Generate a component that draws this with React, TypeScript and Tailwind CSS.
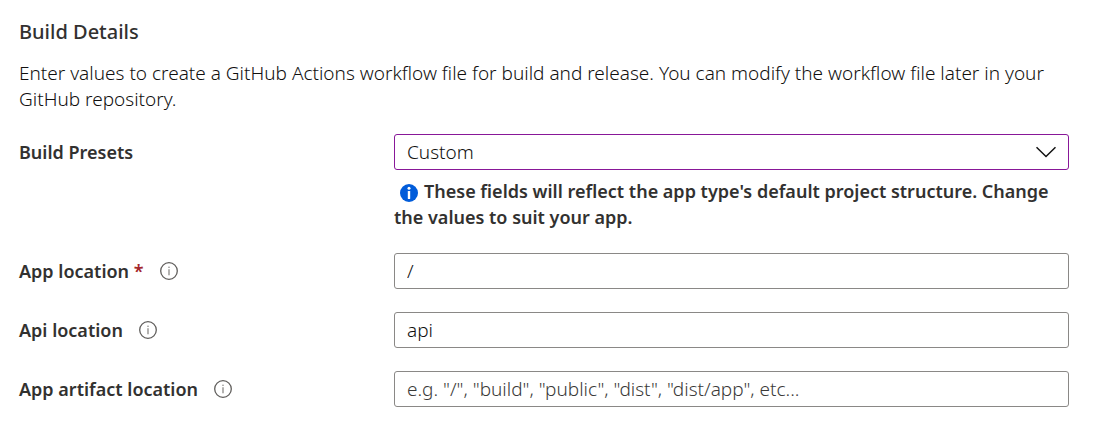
import { useState, type ReactNode } from "react";

function InfoOutline({ label }: { label: string }) {
  return (
    <button type="button" aria-label={`About ${label}`} className="ml-4 block shrink-0">
      <svg viewBox="0 0 18 18" className="block size-[18px]" fill="none" aria-hidden="true">
        <circle cx="9" cy="9" r="8.3" stroke="#605e5c" strokeWidth="1.3" />
        <path d="M9 7.2V13.2" stroke="#8a8886" strokeWidth="1.3" />
        <circle cx="9" cy="5.2" r="0.8" fill="#8a8886" />
      </svg>
    </button>
  );
}

function Row({
  id,
  label,
  required,
  info,
  children,
}: {
  id: string;
  label: string;
  required?: boolean;
  info?: boolean;
  children: ReactNode;
}) {
  return (
    <div className="grid grid-cols-[375px_minmax(0,1fr)] items-start">
      <div className="flex h-9 items-center">
        <label htmlFor={id} className="font-semibold">
          {label}
          {required && <span className="text-[#a4262c]"> *</span>}
        </label>
        {info && <InfoOutline label={label} />}
      </div>
      <div>{children}</div>
    </div>
  );
}

const fieldClass =
  "block h-9 w-full rounded-[3px] border border-[#8a8886] bg-white px-3 text-[19px] font-light text-[#11100f] outline-none placeholder:text-[#3b3a39] focus:border-[#0078d4]";

export default function App() {
  const [preset, setPreset] = useState("Custom");
  const [app, setApp] = useState("/");
  const [api, setApi] = useState("api");
  const [artifact, setArtifact] = useState("");

  return (
    <main className="min-h-screen bg-white pt-[19px] pr-[41px] pb-10 pl-[19px] font-['Noto_Sans','Open_Sans',sans-serif] text-[18px] leading-[26px] text-[#323130]">
      <h2 className="text-[20px] font-medium">Build Details</h2>
      <p className="mt-[15px] text-[19px] font-light text-[#11100f]">
        Enter values to create a GitHub Actions workflow file for build and release. You can modify the workflow
        file later in your GitHub repository.
      </p>
      <form className="mt-[22px] flex flex-col gap-[23px]">
        <Row id="preset" label="Build Presets">
          <div className="relative">
            <select
              id="preset"
              value={preset}
              onChange={(e) => setPreset(e.target.value)}
              className="block h-9 w-full appearance-none rounded-[3px] border border-[#881798] bg-white px-3 text-[19px] font-light text-[#11100f] outline-none"
            >
              <option>Custom</option>
              <option>React</option>
              <option>Angular</option>
              <option>Vue.js</option>
            </select>
            <svg
              viewBox="0 0 20 12"
              className="pointer-events-none absolute top-3 right-[13px] h-3 w-5"
              fill="none"
              aria-hidden="true"
            >
              <path d="M0.5 1.2L10 10.5L19.5 1.2" stroke="#111111" strokeWidth="1.5" />
            </svg>
          </div>
          <p className="mt-2 font-semibold">
            <svg viewBox="0 0 18 18" className="mr-1.5 ml-1.5 inline-block size-[18px] align-[-4px]" aria-hidden="true">
              <circle cx="9" cy="9" r="9" fill="#015cda" />
              <rect x="7.8" y="7" width="2.4" height="8" rx="0.6" fill="#ffffff" />
              <circle cx="9" cy="4.3" r="1.5" fill="#ffffff" />
            </svg>
            These fields will reflect the app type's default project structure. Change the values to suit your app.
          </p>
        </Row>
        <Row id="app-location" label="App location" required info>
          <input
            id="app-location"
            type="text"
            required
            value={app}
            onChange={(e) => setApp(e.target.value)}
            className={fieldClass}
          />
        </Row>
        <Row id="api-location" label="Api location" info>
          <input
            id="api-location"
            type="text"
            value={api}
            onChange={(e) => setApi(e.target.value)}
            className={fieldClass}
          />
        </Row>
        <Row id="artifact-location" label="App artifact location" info>
          <input
            id="artifact-location"
            type="text"
            value={artifact}
            onChange={(e) => setArtifact(e.target.value)}
            placeholder={'e.g. "/", "build", "public", "dist", "dist/app", etc...'}
            className={fieldClass}
          />
        </Row>
      </form>
    </main>
  );
}
